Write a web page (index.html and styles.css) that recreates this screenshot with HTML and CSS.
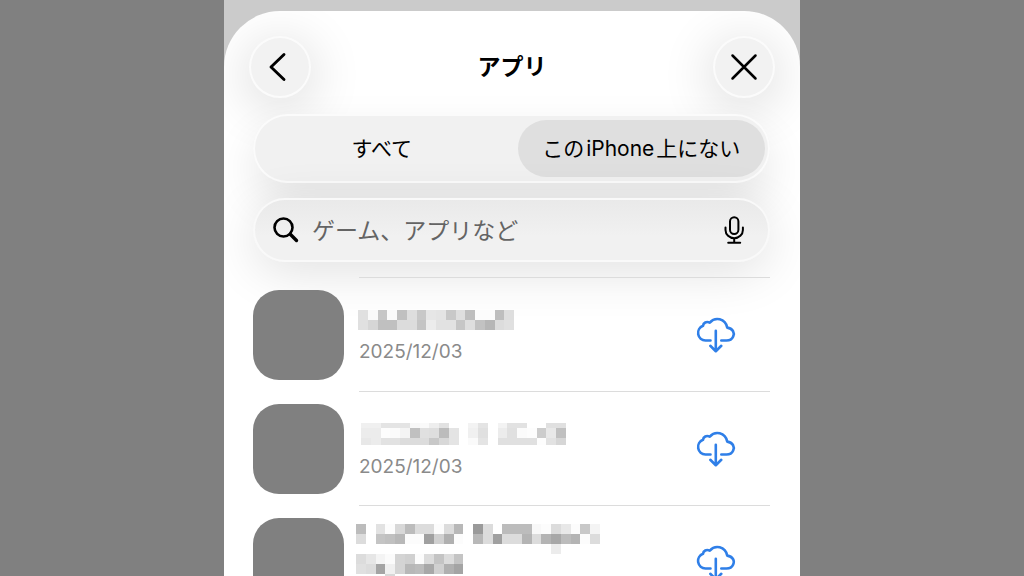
FILE: index.html
```html
<!DOCTYPE html>
<html lang="ja">
<head>
<meta charset="utf-8">
<meta name="viewport" content="width=device-width, initial-scale=1">
<title>アプリ</title>
<link rel="stylesheet" href="styles.css">
</head>
<body>
<div class="device">
  <main class="sheet">
    <header class="header">
      <div class="titlebar">
        <button class="round" type="button" aria-label="戻る">
          <svg width="62" height="62" viewBox="0 0 62 62"><path d="M35 18.500 22 31l13 12.500" stroke-width="2.900"/></svg>
        </button>
        <h1 class="title">アプリ</h1>
        <button class="round" type="button" aria-label="閉じる">
          <svg width="62" height="62" viewBox="0 0 62 62"><path d="m19.500 19.500 23 23m0-23-23 23" stroke-width="2.500"/></svg>
        </button>
      </div>
      <div class="segments">
        <button class="segment" type="button" aria-pressed="false">すべて</button>
        <button class="segment segment-on" type="button" aria-pressed="true">この<span class="latin">iPhone</span>上にない</button>
      </div>
      <div class="search">
        <svg width="26" height="26" viewBox="0 0 26 26"><circle cx="10.500" cy="10.500" r="9" stroke-width="2.600"/><path d="m17.300 17.300 6.200 6.200" stroke-width="3.400"/></svg>
        <input class="query" type="text" aria-label="検索" placeholder="ゲーム、アプリなど">
        <button class="mic" type="button" aria-label="音声入力">
          <svg width="20" height="28" viewBox="0 0 20 28"><rect x="6" y="1.200" width="8.400" height="16.800" rx="4.200" stroke-width="2"/><path d="M1.500 11.500v2.500a8.700 8.200 0 0 0 17.400 0v-2.500M10.200 22.200v4.500M4.200 26.700h12" stroke-width="2"/></svg>
        </button>
      </div>
    </header>
    <ul class="apps">
      <li class="app">
        <div class="app-icon"></div>
        <div class="app-body">
          <div class="app-text">
            <svg class="mosaic" data-cells="e0 f9 c6 fa c0 de c8 e6 e4 c8 de be fc fc be de|e0 d6 c0 c0 dc dc c4 ec e2 e2 c6 de c2 b6 dc e0" data-heights="10 10"></svg>
            <time class="date" datetime="2025-12-03">2025/12/03</time>
          </div>
          <button class="get" type="button" aria-label="ダウンロード"><svg width="40" height="38" viewBox="0 0 40 38"><path d="M14.500 24.500H9.500A7.600 7.600 0 0 1 7 9.800C7.200 6.800 10.500 5 13.800 6.700 19 .5 29.300 2.200 31.200 11.600 37 12.300 38.800 17 37.200 20.400 35.900 23.400 33.600 24.500 30.500 24.500H25.300M19.800 14.800V35M14.300 29.800l5.500 5.400 5.500-5.400"/></svg></button>
        </div>
      </li>
      <li class="app">
        <div class="app-icon"></div>
        <div class="app-body">
          <div class="app-text app-text-indented">
            <svg class="mosaic" data-cells="f0 f0 e4 e4 e4 f8 fa ee e2 ff ff f3 e4 ff f3 e2 e2 ff ff e0 e0|ec ec fd fb f4 c0 e0 de bc e4 ff f0 e0 ff ec e0 fb fd cc e8 c0|e8 ec e2 e2 dc dc dc c8 d8 e4 ff fa e4 ff e0 e0 e0 e0 fd e2 d6" data-heights="5 10 7"></svg>
            <time class="date" datetime="2025-12-03">2025/12/03</time>
          </div>
          <button class="get" type="button" aria-label="ダウンロード"><svg width="40" height="38" viewBox="0 0 40 38"><path d="M14.500 24.500H9.500A7.600 7.600 0 0 1 7 9.800C7.200 6.800 10.500 5 13.800 6.700 19 .5 29.300 2.200 31.200 11.600 37 12.300 38.800 17 37.200 20.400 35.900 23.400 33.600 24.500 30.500 24.500H25.300M19.800 14.800V35M14.300 29.800l5.500 5.400 5.500-5.400"/></svg></button>
        </div>
      </li>
      <li class="app">
        <div class="app-icon"></div>
        <div class="app-body">
          <div class="app-text app-text-tall">
            <svg class="mosaic" data-cells="bc ff e2 fc d8 bc dc dc fc dc b8 ff 9a dc ff bc bc bc f8 fc dc e8 fc c8 f4|dc ff c4 c0 b8 fc fc a0 d0 b0 fc ff b8 dc a0 dc dc b4 dc b4 a8 bc b4 fc dc|ff ff ff ff ff ff ff ff ff ff ff ff ff ff ff ff ff ff ff ff ec|dc e6 f4 fb d4 d0 fc dc c4 dc c4|e0 dc a4 f0 d4 b8 bc a8 d0 b0 a4|ff ff ff d8" data-heights="10 10 10 10 10 3"></svg>
          </div>
          <button class="get" type="button" aria-label="ダウンロード"><svg width="40" height="38" viewBox="0 0 40 38"><path d="M14.500 24.500H9.500A7.600 7.600 0 0 1 7 9.800C7.200 6.800 10.500 5 13.800 6.700 19 .5 29.300 2.200 31.200 11.600 37 12.300 38.800 17 37.200 20.400 35.900 23.400 33.600 24.500 30.500 24.500H25.300M19.800 14.800V35M14.300 29.800l5.500 5.400 5.500-5.400"/></svg></button>
        </div>
      </li>
    </ul>
  </main>
</div>
<script src="mosaic.js"></script>
</body>
</html>
```
FILE: styles.css
```css
* { box-sizing: border-box; }
body {
  margin: 0;
  background: #808080;
  color: #000;
  font-family: Inter, "Noto Sans CJK JP", sans-serif;
}
button { border: 0; padding: 0; background: none; color: inherit; font: inherit; }
svg { display: block; flex: none; fill: none; stroke: #000; stroke-linecap: round; stroke-linejoin: round; }
.device {
  width: 56.25%;
  height: 100vh;
  margin: 0 auto;
  padding-top: 11px;
  overflow: hidden;
  background: #cbcbcb;
}
.sheet {
  min-height: 100%;
  border-radius: 56px 56px 0 0;
  background: #fff;
  overflow: hidden;
}
.header {
  display: flex;
  flex-direction: column;
  padding: 25px 30px 15px 29px;
}
.titlebar {
  display: flex;
  align-items: center;
  justify-content: space-between;
  margin: 0 -5px 16px -4px;
}
.title { margin: 0; font-size: 23px; line-height: 32px; font-weight: 600; }
.round {
  width: 62px;
  height: 62px;
  border-radius: 50%;
  background: #f2f2f2;
  box-shadow: inset 0 0 0 2px #fbfbfb, 0 8px 50px 6px rgba(0, 0, 0, .12);
}
.segments {
  display: grid;
  grid-template-columns: 1fr 1fr;
  gap: 12px;
  margin-bottom: 15px;
  padding: 6px 5px;
  border-radius: 35px;
  background: #f1f1f1;
  box-shadow: inset 0 0 0 2px #fbfbfb, 0 20px 44px rgba(0, 0, 0, .1);
}
.segment { height: 57px; border-radius: 29px; font-size: 21px; line-height: 28px; }
.segment-on { background: #dfdfdf; }
.latin { margin: 0 2px; }
.search {
  display: flex;
  align-items: center;
  height: 64px;
  padding: 0 26px 0 20px;
  border-radius: 32px;
  background: linear-gradient(#e9e9e9, #f1f1f1 60%);
  box-shadow: inset 0 0 0 2px #f9f9f9, 0 10px 50px rgba(0, 0, 0, .12);
}
.query {
  flex: 1;
  min-width: 0;
  padding: 2px 13px 0;
  border: 0;
  outline: 0;
  background: none;
  font: 23px/32px Inter, "Noto Sans CJK JP", sans-serif;
}
.query::placeholder { color: #646464; opacity: 1; }
.apps { position: relative; margin: 0; padding: 0 30px 0 29px; list-style: none; }
.app { display: flex; gap: 15px; }
.app-icon { flex: none; width: 91px; height: 90px; margin-top: 13px; border-radius: 26px; background: #808080; }
.app-body {
  flex: 1;
  display: flex;
  justify-content: space-between;
  height: 114px;
  padding-right: 34px;
  border-top: 1px solid #dcdcdc;
}
.app-text { padding-top: 32px; }
.app-text-indented { padding-top: 31px; }
.app-text-tall { padding-top: 18px; }
.mosaic { margin-left: -1px; stroke: none; }
.app-text-indented .mosaic { margin-left: 2px; }
.app-text-tall .mosaic { margin-left: -3px; }
.date { display: block; margin-top: 9px; color: #8a8a8a; font-size: 19px; line-height: 26px; }
.get { align-self: flex-start; margin-top: 38px; }
.get svg { stroke: #2f7fe8; stroke-width: 2.6; }
```
FILE: mosaic.js
```js
// Draws each obscured app name as a grid of grey cells.
const CELL = 9.75;
document.querySelectorAll('.mosaic').forEach((svg) => {
  const heights = svg.dataset.heights.split(' ').map(Number);
  let y = 0;
  let width = 0;
  svg.dataset.cells.split('|').forEach((line, row) => {
    line.split(' ').forEach((shade, col) => {
      width = Math.max(width, (col + 1) * CELL);
      if (shade !== 'ff') {
        const rect = document.createElementNS('http://www.w3.org/2000/svg', 'rect');
        rect.setAttribute('x', col * CELL);
        rect.setAttribute('y', y);
        rect.setAttribute('width', CELL);
        rect.setAttribute('height', heights[row]);
        rect.setAttribute('fill', '#' + shade.repeat(3));
        rect.setAttribute('shape-rendering', 'crispEdges');
        svg.append(rect);
      }
    });
    y += heights[row];
  });
  svg.setAttribute('width', Math.ceil(width));
  svg.setAttribute('height', y);
});
```
